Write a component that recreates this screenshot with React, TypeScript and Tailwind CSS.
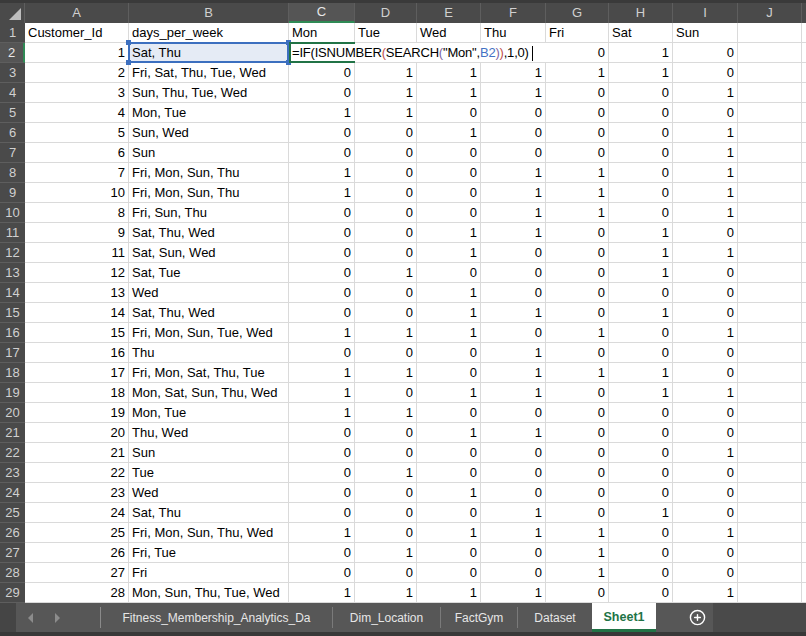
import { CirclePlus } from 'lucide-react';

const cols = ['A', 'B', 'C', 'D', 'E', 'F', 'G', 'H', 'I', 'J'];

// [id, days, Mon, Tue, Wed, Thu, Fri, Sat, Sun]
const rows: [number, string, number[]][] = [
  [1, 'Sat, Thu', [0, 0, 0, 1, 0, 1, 0]],
  [2, 'Fri, Sat, Thu, Tue, Wed', [0, 1, 1, 1, 1, 1, 0]],
  [3, 'Sun, Thu, Tue, Wed', [0, 1, 1, 1, 0, 0, 1]],
  [4, 'Mon, Tue', [1, 1, 0, 0, 0, 0, 0]],
  [5, 'Sun, Wed', [0, 0, 1, 0, 0, 0, 1]],
  [6, 'Sun', [0, 0, 0, 0, 0, 0, 1]],
  [7, 'Fri, Mon, Sun, Thu', [1, 0, 0, 1, 1, 0, 1]],
  [10, 'Fri, Mon, Sun, Thu', [1, 0, 0, 1, 1, 0, 1]],
  [8, 'Fri, Sun, Thu', [0, 0, 0, 1, 1, 0, 1]],
  [9, 'Sat, Thu, Wed', [0, 0, 1, 1, 0, 1, 0]],
  [11, 'Sat, Sun, Wed', [0, 0, 1, 0, 0, 1, 1]],
  [12, 'Sat, Tue', [0, 1, 0, 0, 0, 1, 0]],
  [13, 'Wed', [0, 0, 1, 0, 0, 0, 0]],
  [14, 'Sat, Thu, Wed', [0, 0, 1, 1, 0, 1, 0]],
  [15, 'Fri, Mon, Sun, Tue, Wed', [1, 1, 1, 0, 1, 0, 1]],
  [16, 'Thu', [0, 0, 0, 1, 0, 0, 0]],
  [17, 'Fri, Mon, Sat, Thu, Tue', [1, 1, 0, 1, 1, 1, 0]],
  [18, 'Mon, Sat, Sun, Thu, Wed', [1, 0, 1, 1, 0, 1, 1]],
  [19, 'Mon, Tue', [1, 1, 0, 0, 0, 0, 0]],
  [20, 'Thu, Wed', [0, 0, 1, 1, 0, 0, 0]],
  [21, 'Sun', [0, 0, 0, 0, 0, 0, 1]],
  [22, 'Tue', [0, 1, 0, 0, 0, 0, 0]],
  [23, 'Wed', [0, 0, 1, 0, 0, 0, 0]],
  [24, 'Sat, Thu', [0, 0, 0, 1, 0, 1, 0]],
  [25, 'Fri, Mon, Sun, Thu, Wed', [1, 0, 1, 1, 1, 0, 1]],
  [26, 'Fri, Tue', [0, 1, 0, 0, 1, 0, 0]],
  [27, 'Fri', [0, 0, 0, 0, 1, 0, 0]],
  [28, 'Mon, Sun, Thu, Tue, Wed', [1, 1, 1, 1, 0, 0, 1]],
];

const headers = ['Mon', 'Tue', 'Wed', 'Thu', 'Fri', 'Sat', 'Sun'];
const tabs = [
  { name: 'Fitness_Membership_Analytics_Da', w: 'w-[232px]' },
  { name: 'Dim_Location', w: 'w-[108px]' },
  { name: 'FactGym', w: 'w-[77px]' },
  { name: 'Dataset', w: 'w-[74px]' },
];

const gridCols = 'grid grid-cols-[25px_104px_160px_66px_62px_64px_65px_63px_64px_65px_64px_1fr]';
const cell = 'h-[20px] border-r border-b border-[#dadada] flex items-center px-[3px] pt-[1px] whitespace-nowrap overflow-hidden';
const rowHead = 'h-[20px] bg-[#4a4a4a] border-b border-[#5e5e5e] flex items-center justify-center text-[13px] text-[#d0d0d0]';

function Handle({ pos }: { pos: string }) {
  return <span className={`absolute w-[5px] h-[5px] bg-[#3c6fbf] ${pos}`} />;
}

export default function App() {
  return (
    <div className="w-[806px] h-[636px] overflow-hidden bg-white flex flex-col font-['Liberation_Sans',Arial,sans-serif] text-[13px] text-black">
      <div className="h-[3px] bg-[#3a3a3a]" />

      {/* Column headers */}
      <div className={gridCols}>
        <div className="h-[20px] bg-[#4a4a4a] border-r border-[#5e5e5e] relative">
          <span className="absolute right-[3px] bottom-[3px] w-0 h-0 border-l-[12px] border-l-transparent border-b-[12px] border-b-[#bdbdbd]" />
        </div>
        {cols.map(c => (
          <div
            key={c}
            className={`h-[20px] border-r border-[#5e5e5e] flex items-center justify-center text-[13px] ${
              c === 'C' ? 'bg-[#555555] text-[#e8e8e8] border-b-2 border-b-[#2f8a55]' : 'bg-[#4a4a4a] text-[#d0d0d0]'
            }`}
          >
            {c}
          </div>
        ))}
        <div className="h-[20px] bg-[#4a4a4a]" />
      </div>

      {/* Sheet */}
      <div className="flex-1 overflow-hidden">
        {/* Row 1 */}
        <div className={gridCols}>
          <div className={rowHead}>1</div>
          <div className={cell}>Customer_Id</div>
          <div className={cell}>days_per_week</div>
          {headers.map(h => (
            <div key={h} className={cell}>{h}</div>
          ))}
          <div className={cell} />
          <div className={cell} />
        </div>

        {rows.map(([id, days, vals], i) => {
          const editing = i === 0;
          return (
            <div key={i} className={gridCols}>
              <div className={`${rowHead} ${editing ? 'bg-[#555555] text-[#e8e8e8] border-r-2 border-r-[#2f8a55]' : ''}`}>{i + 2}</div>
              <div className={`${cell} justify-end`}>{id}</div>
              {editing ? (
                <div className="h-[20px] border-b border-r border-[#dadada] relative bg-[#e5ebf5] flex items-center pt-[1px]">
                  <div className="absolute -left-[1px] -top-[1px] right-[-1px] bottom-[-1px] border-2 border-[#3c6fbf]" />
                  <Handle pos="-left-[3px] -top-[3px]" />
                  <Handle pos="-right-[3px] -top-[3px]" />
                  <Handle pos="-left-[3px] -bottom-[3px]" />
                  <Handle pos="-right-[3px] -bottom-[3px]" />
                  <span className="relative px-[3px]">{days}</span>
                </div>
              ) : (
                <div className={cell}>{days}</div>
              )}
              {vals.map((v, j) => {
                if (editing && j === 0) {
                  return (
                    <div key={j} className="h-[20px] relative z-10">
                      <div className="absolute left-0 top-[-1px] h-[21px] w-[66px] border-y-2 border-l-2 border-[#217346]" />
                      <div className="absolute left-[2px] top-[1px] h-[17px] w-[246px] bg-white flex items-center pl-[1px] pt-[1px] whitespace-nowrap tracking-[-0.2px]">
                        <span>=IF(ISNUMBER</span>
                        <span className="text-[#c0504d]">(</span>
                        <span>SEARCH</span>
                        <span className="text-[#8064a2]">(</span>
                        <span>"Mon",</span>
                        <span className="text-[#4472c4]">B2</span>
                        <span className="text-[#8064a2]">)</span>
                        <span className="text-[#c0504d]">)</span>
                        <span>,1,0)</span>
                        <span className="shrink-0 ml-[3px] w-[1px] h-[15px] bg-black" />
                      </div>
                    </div>
                  );
                }
                if (editing && j < 4) return <div key={j} className="h-[20px] border-b border-[#dadada]" />;
                return (
                  <div key={j} className={`${cell} justify-end`}>{v}</div>
                );
              })}
              <div className={cell} />
              <div className={cell} />
            </div>
          );
        })}
      </div>

      {/* Sheet tabs */}
      <div className="h-[29px] flex bg-[#4a4a4a]">
        <div className="w-[16px] bg-[#454545]" />
        <div className="flex bg-[#575757]">
          <div className="w-[85px] flex items-center gap-[22px] pl-[12px] border-r border-[#8a8a8a] my-[4px]">
            <span className="w-0 h-0 border-y-[5px] border-y-transparent border-r-[5px] border-r-[#8c8c8c]" />
            <span className="w-0 h-0 border-y-[5px] border-y-transparent border-l-[5px] border-l-[#8c8c8c]" />
          </div>
          {tabs.map((t, i) => (
            <div
              key={t.name}
              className={`${t.w} flex items-center justify-center text-[12px] text-[#e6e6e6] ${i < tabs.length - 1 ? 'border-r border-[#7a7a7a]' : ''} my-[4px]`}
            >
              {t.name}
            </div>
          ))}
          <div className="w-[64px] bg-white flex items-center justify-center text-[12.5px] font-bold text-[#217346] border-b-[3px] border-[#217346] pt-[3px]">
            Sheet1
          </div>
          <div className="w-[57px] flex items-center justify-center pl-[26px]">
            <CirclePlus size={17} strokeWidth={2} className="text-white" />
          </div>
        </div>
        <div className="flex-1" />
      </div>
      <div className="h-[4px] bg-[#383838]" />
    </div>
  );
}
